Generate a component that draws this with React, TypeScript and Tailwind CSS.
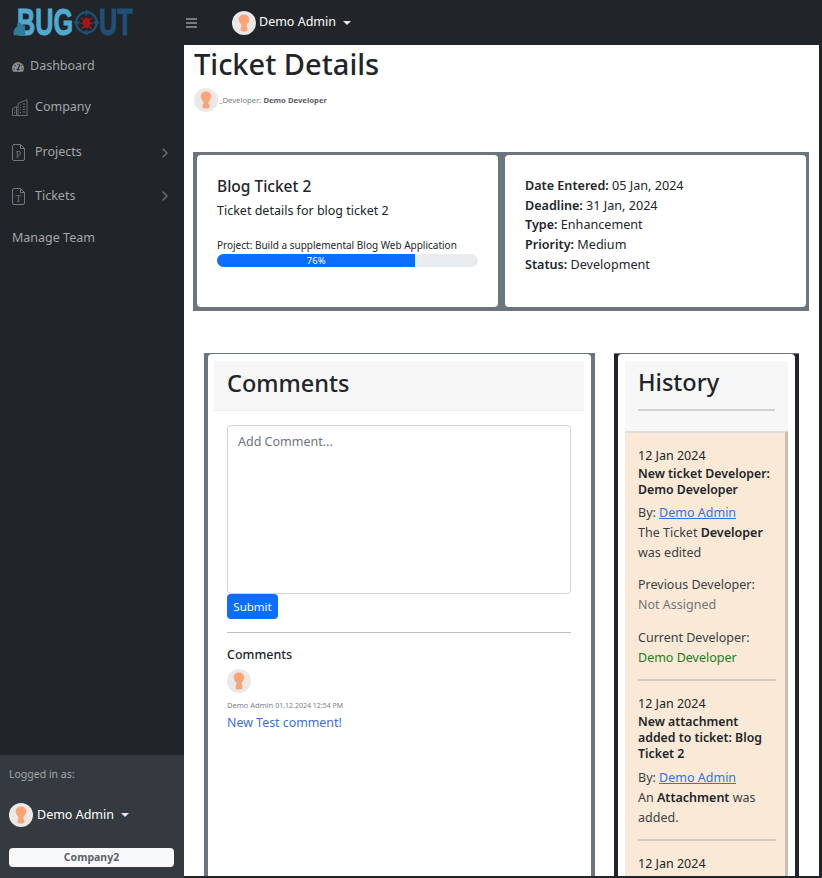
import React from "react";
import { FaTachometerAlt } from "react-icons/fa";
import { FiChevronRight } from "react-icons/fi";

const Avatar = ({ size = "w-6 h-6" }: { size?: string }) => (
  <svg className={`${size} shrink-0`} viewBox="0 0 24 24">
    <circle cx="12" cy="12" r="12" fill="#ebe9e7" />
    <path
      d="M12 3.500c-3.200 0-5.300 2.200-5.300 5.100 0 2.100 1.300 3.300 2.200 4.600.5.700.6 1.500.6 2.300l-.9 1.200v3c1 .6 2.200.9 3.400.9s2.400-.3 3.400-.9v-3l-.9-1.200c0-.8.1-1.600.6-2.300.9-1.300 2.200-2.500 2.200-4.600 0-2.900-2.100-5.100-5.300-5.100z"
      fill="#fca478"
    />
  </svg>
);

const Caret = () => <span className="ml-[7px] inline-block w-0 h-0 border-x-[4px] border-x-transparent border-t-[4px] border-t-white/90" />;

const Logo = () => (
  <div className="flex items-center h-[45px] pl-[13px]">
    <svg className="w-[13px] h-[20px] -mr-[9px] mt-[6px] relative z-10" viewBox="0 0 14 20">
      <path d="M1 20c-1-4 0-7 3-9l1-4 3-1 2 3 3 1v10z" fill="#2f7ba0" />
    </svg>
    <span className="w-[57px] font-['Liberation_Sans',sans-serif] font-bold text-[36px] leading-none text-[#4fa9d1] [-webkit-text-stroke:1px_#4fa9d1] origin-left inline-block scale-x-[0.7] whitespace-nowrap">BUG</span>
    <svg className="w-[25px] h-[25px] shrink-0" viewBox="0 0 28 28">
      <circle cx="14" cy="14" r="11.500" fill="none" stroke="#1f5078" strokeWidth="2.500" />
      <path d="M14 0v6M14 22v6M0 14h6M22 14h6" stroke="#1f5078" strokeWidth="2" />
      <ellipse cx="14" cy="14.500" rx="4.500" ry="6" fill="#a3161c" />
      <path d="M8 9l4 3M20 9l-4 3M7 15h4M21 15h-4M8 21l4-3M20 21l-4-3" stroke="#a3161c" strokeWidth="1.300" />
    </svg>
    <span className="font-['Liberation_Sans',sans-serif] font-bold text-[36px] leading-none text-[#1f5078] [-webkit-text-stroke:1px_#1f5078] origin-left inline-block scale-x-[0.7] whitespace-nowrap">UT</span>
  </div>
);

const BuildingIcon = () => (
  <svg className="w-[16px] h-[17px]" viewBox="0 0 16 17" fill="none" stroke="#6c7075" strokeWidth="0.9">
    <path d="M.5 16.500v-7l4-2v9M6 16.500v-12l9-4v16zM.5 16.500h15" />
    <path d="M8 6h1M11 5h2M8 8.500h1M11 8h2M8 11h1M11 10.500h2M8 13.500h1M11 13h2M2 11h1M2 13.500h1" strokeWidth="1.200" />
  </svg>
);

const FileLetterIcon = ({ letter }: { letter: string }) => (
  <svg className="w-[13px] h-[17px]" viewBox="0 0 13 17" fill="none" stroke="#74787c" strokeWidth="1">
    <path d="M2 .5h6.500l4 4V15a1.500 1.500 0 0 1-1.500 1.500H2A1.500 1.500 0 0 1 .5 15V2A1.500 1.500 0 0 1 2 .5z" />
    <path d="M8.500.5v4h4" />
    <text x="6.500" y="13.500" fontSize="9.500" fill="#74787c" stroke="none" textAnchor="middle" fontFamily="'Liberation Serif', serif">
      {letter}
    </text>
  </svg>
);

const SideItem = ({ icon, label, chevron, className }: { icon: React.ReactNode; label: string; chevron?: boolean; className: string }) => (
  <div className={`flex items-center text-[12.500px] text-[#a4a6a8] pl-3 pr-[11px] ${className}`}>
    <span className="w-[18px] flex justify-start">{icon}</span>
    <span className="flex-1">{label}</span>
    {chevron && <FiChevronRight className="w-[16px] h-[16px] text-[#6c7075]" />}
  </div>
);

const Sidebar = () => (
  <aside className="w-[184px] shrink-0 bg-[#212529] flex flex-col">
    <Logo />
    <nav className="flex-1 flex flex-col">
      <SideItem className="h-[43px]" icon={<FaTachometerAlt className="w-3 h-3 text-[#8a8d90]" />} label="Dashboard" />
      <SideItem className="h-[38px] [&>span:first-child]:w-[23px]" icon={<BuildingIcon />} label="Company" />
      <SideItem className="h-[53px] [&>span:first-child]:w-[23px]" icon={<FileLetterIcon letter="P" />} label="Projects" chevron />
      <SideItem className="h-[34px] [&>span:first-child]:w-[23px]" icon={<FileLetterIcon letter="T" />} label="Tickets" chevron />
      <div className="h-[51px] pl-3 flex items-center text-[12.500px] text-[#a4a6a8]">Manage Team</div>
    </nav>
    <div className="h-[123px] bg-[#343a40] px-[9px] pt-[11px]">
      <div className="text-[10.500px] leading-4 text-[#a4a8ab]">Logged in as:</div>
      <div className="flex items-center mt-[21px] text-[12.500px] text-white">
        <Avatar />
        <span className="ml-1">Demo Admin</span>
        <Caret />
      </div>
      <div className="mt-[21px] w-[165px] h-[19px] rounded bg-[#f8f9fa] flex items-center justify-center text-[10.500px] font-bold text-[#5c6166]">
        Company2
      </div>
    </div>
  </aside>
);

const Topbar = () => (
  <header className="h-[45px] shrink-0 bg-[#212529] flex items-center pl-[2px]">
    <svg className="w-[11px] h-[10px]" viewBox="0 0 11 10" stroke="#94979a" strokeWidth="1.300">
      <path d="M0 1h11M0 5h11M0 9h11" />
    </svg>
    <div className="flex items-center ml-[35px] text-[12.500px] text-white">
      <Avatar />
      <span className="ml-[3px]">Demo Admin</span>
      <Caret />
    </div>
  </header>
);

const HistoryEntry = ({ title, titleClass = "", children }: { title: string; titleClass?: string; children: React.ReactNode }) => (
  <div className="pb-[11px] mb-[15px] border-b-2 border-[#d6ccbf]">
    <div className="text-[12.500px] leading-[16px] pb-[2px]">12 Jan 2024</div>
    <div className={`text-[12.300px] leading-[16px] font-semibold ${titleClass}`}>{title}</div>
    <div className="text-[12.500px] leading-[19.500px] mt-[5px] text-[#3a3f44]">
      By: <a className="text-[#3b6fd9] underline">Demo Admin</a>
    </div>
    {children}
  </div>
);

const TicketSummary = () => (
  <div className="mt-[40px] mr-[10px] ml-[9px] h-[159px] bg-[#6c757d] pl-[4px] pr-[3px] pt-[3px] pb-[4px] grid grid-cols-2 gap-[7px] shrink-0">
    <div className="bg-white rounded-[4px] pl-[20px] pr-[20px] pt-[21px]">
      <h5 className="text-[15.500px] leading-5 font-medium text-[#212529]">Blog Ticket 2</h5>
      <p className="text-[12.500px] leading-[17px] mt-[6px] text-[#212529]">Ticket details for blog ticket 2</p>
      <p className="text-[10px] leading-[14px] mt-[19px] text-[#212529]">Project: Build a supplemental Blog Web Application</p>
      <div className="h-[13px] mt-[2px] rounded-full bg-[#e9ecef] overflow-hidden">
        <div className="w-[76%] h-full bg-[#0d6efd] text-white text-[9.500px] leading-[13px] text-center">76%</div>
      </div>
    </div>
    <div className="bg-white rounded-[4px] px-5 pt-[21px] text-[12.600px] leading-[19.700px] text-[#212529]">
      <div><b className="font-semibold">Date Entered:</b> 05 Jan, 2024</div>
      <div><b className="font-semibold">Deadline:</b> 31 Jan, 2024</div>
      <div><b className="font-semibold">Type:</b> Enhancement</div>
      <div><b className="font-semibold">Priority:</b> Medium</div>
      <div><b className="font-semibold">Status:</b> Development</div>
    </div>
  </div>
);

const CommentsCard = () => (
  <section className="w-[391px] bg-[#6c757d] px-[4px] pt-[1px]">
    <div className="h-full bg-white rounded-t-[4px] pl-[6px] pr-[7px] pt-[7px]">
      <div className="h-[50px] bg-[#f7f7f7] border-b border-[#ececec] px-[13px] pb-[4px] flex items-center text-[23.500px] font-medium text-[#212529]">Comments</div>
      <div className="px-[13px] pt-[14px]">
        <div className="h-[169px] border border-[#ced4da] rounded-[4px] px-[10px] py-[6px] text-[12.500px] leading-[19px] text-[#6c757d]">Add Comment...</div>
        <div className="w-[51px] h-[25px] rounded-[4px] bg-[#0d6efd] text-white text-[11.500px] flex items-center justify-center">Submit</div>
        <div className="mt-[13px] border-t border-[#bdbdbd]" />
        <div className="mt-[13px] text-[12.500px] leading-[17px] font-medium text-[#212529]">Comments</div>
        <div className="mt-[6px]"><Avatar /></div>
        <div className="mt-[6px] text-[7.500px] leading-[12px] text-[#7a8087]">
          Demo Admin <span className="text-[7px]">01.12.2024 12:54 PM</span>
        </div>
        <div className="mt-[2px] text-[12.400px] leading-[17px] text-[#3b6fd9]">New Test comment!</div>
      </div>
    </div>
  </section>
);

const HistoryCard = () => (
  <section className="w-[185px] bg-[#212529] border-t border-t-[#757575] px-[4px] overflow-hidden">
    <div className="h-full bg-white rounded-t-[4px] px-[7px] pt-[7px]">
      <div className="h-[70px] bg-[#f7f7f7] px-[13px]">
        <div className="h-[50px] pb-[4px] flex items-center text-[23.500px] font-medium text-[#212529] border-b-2 border-[#d2d2d2]">History</div>
      </div>
      <div className="bg-[#f9e9d6] border-r-[3px] border-[#c7bfb4] border-t-2 border-t-[#dcdcdc] pl-[13px] pr-[9px] pt-[15px] text-[#212529]">
        <HistoryEntry title="New ticket Developer: Demo Developer">
          <div className="text-[12.500px] leading-[20px] text-[#3a3f44]">The Ticket <b className="font-semibold text-[#212529]">Developer</b> was edited</div>
          <div className="text-[12.500px] leading-[20px] mt-[12px] text-[#3a3f44]">Previous Developer:</div>
          <div className="text-[12.500px] leading-[20px] text-[#757575]">Not Assigned</div>
          <div className="text-[12.500px] leading-[20px] mt-[13px] text-[#3a3f44]">Current Developer:</div>
          <div className="text-[12.500px] leading-[20px] text-[#198019]">Demo Developer</div>
        </HistoryEntry>
        <HistoryEntry title="New attachment added to ticket: Blog Ticket 2" titleClass="pb-[1px]">
          <div className="mt-[1px] text-[12.500px] leading-[20px] text-[#3a3f44]">An <b className="font-semibold text-[#212529]">Attachment</b> was added.</div>
        </HistoryEntry>
        <div className="text-[12.500px] leading-[16px] pb-10">12 Jan 2024</div>
      </div>
    </div>
  </section>
);

export default function App() {
  return (
    <div className="h-[878px] w-[822px] flex overflow-hidden bg-[#212529] font-['Noto_Sans','Open_Sans',sans-serif]">
      <Sidebar />
      <div className="flex-1 min-w-0 flex flex-col">
        <Topbar />
        <main className="h-[831px] mr-[3px] bg-white flex flex-col overflow-hidden">
          <h1 className="ml-[10px] text-[29px] leading-[38px] font-medium text-[#212529]">Ticket Details</h1>
          <div className="ml-[10px] mt-[5px] flex items-center h-6">
            <Avatar />
            <span className="ml-[1px] mt-[1px] text-[7.700px] text-[#7a8087]">
              _Developer: <b className="text-[#5c6166]">Demo Developer</b>
            </span>
          </div>
          <TicketSummary />
          <div className="mt-[42px] pl-[20px] flex gap-[19px] flex-1 min-h-0">
            <CommentsCard />
            <HistoryCard />
          </div>
        </main>
      </div>
    </div>
  );
}
